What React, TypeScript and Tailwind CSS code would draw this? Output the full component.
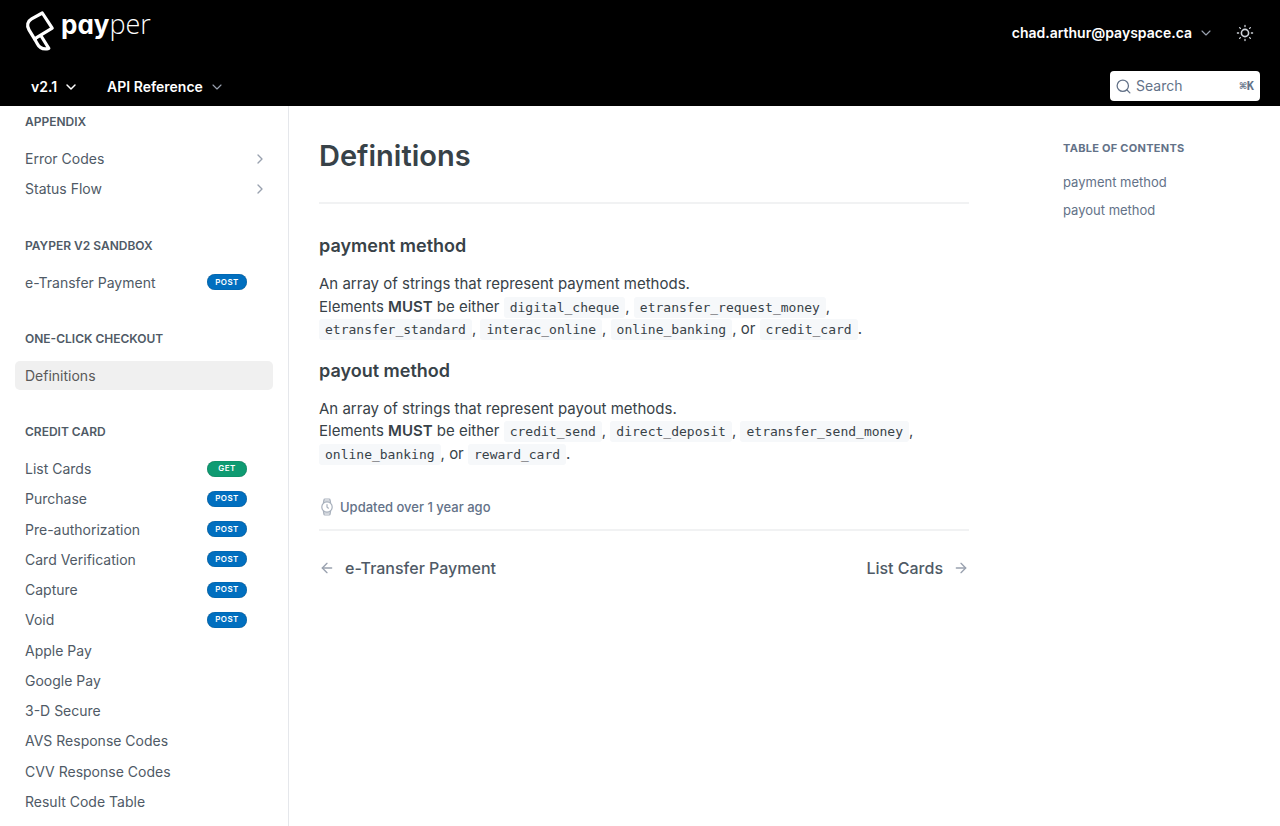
import React from "react";
import { ArrowLeft, ArrowRight, ChevronDown, ChevronRight, Search } from "lucide-react";

type Method = "GET" | "POST";
type Item = { label: string; method?: Method; nested?: boolean; active?: boolean };
type Section = { title: string; items: Item[] };

const sections: Section[] = [
  { title: "APPENDIX", items: [{ label: "Error Codes", nested: true }, { label: "Status Flow", nested: true }] },
  { title: "PAYPER V2 SANDBOX", items: [{ label: "e-Transfer Payment", method: "POST" }] },
  { title: "ONE-CLICK CHECKOUT", items: [{ label: "Definitions", active: true }] },
  {
    title: "CREDIT CARD",
    items: [
      { label: "List Cards", method: "GET" },
      { label: "Purchase", method: "POST" },
      { label: "Pre-authorization", method: "POST" },
      { label: "Card Verification", method: "POST" },
      { label: "Capture", method: "POST" },
      { label: "Void", method: "POST" },
      { label: "Apple Pay" },
      { label: "Google Pay" },
      { label: "3-D Secure" },
      { label: "AVS Response Codes" },
      { label: "CVV Response Codes" },
      { label: "Result Code Table" },
    ],
  },
];

function Logo() {
  return (
    <a href="#home" className="flex items-start gap-1 text-white" aria-label="payper">
      <svg className="mt-2.5 h-[42px] w-8" viewBox="0 0 32 42" fill="none" stroke="currentColor" strokeWidth="3.2" strokeLinejoin="round">
        <path d="M17.3 3 27.2 18.2 9.5 28.8 4 19.8C1.3 15.4 2.6 11.2 6.6 8.9Z" />
        <path d="M9.5 28.8 12 33.2C14.4 38 17.6 40 23.8 38.4L15.8 25.5" />
        <path d="M10 31C10.6 28.6 12 27.4 14.4 26.2" strokeWidth="2" />
      </svg>
      <span className="flex items-baseline leading-12">
        <b className="font-['Inter',sans-serif] text-[26px] font-bold [font-feature-settings:'cv11']">pay</b>
        <span className="font-['Open_Sans',sans-serif] text-[27px] font-light">per</span>
      </span>
    </a>
  );
}

function SunIcon() {
  return (
    <svg className="size-[18px] text-gray-300" viewBox="0 0 18 18" fill="none" stroke="currentColor" strokeLinecap="round">
      <circle cx="9" cy="9" r="3.6" strokeWidth="1.6" />
      <path
        strokeWidth="1.3"
        d="M9 1.4v1.2M9 15.4v1.2M1.4 9h1.2M15.4 9h1.2M3.6 3.6l.8.8M13.6 13.6l.8.8M3.6 14.4l.8-.8M13.6 4.4l.8-.8"
      />
    </svg>
  );
}

function WatchIcon() {
  return (
    <svg className="h-[18px] w-4 text-[#a9b1bd]" viewBox="0 0 16 18" fill="none" stroke="currentColor" strokeWidth="1.2" strokeLinecap="round" strokeLinejoin="round">
      <circle cx="8" cy="9" r="5.2" />
      <path d="M4.4 5 4.9 1.9Q5 1 6 1h4q1 0 1.1.9l.5 3.1M4.4 13l.5 3.1Q5 17 6 17h4q1 0 1.1-.9l.5-3.1M8 6.6V9l1.4 1.2M5 3h6M5 15h6" />
    </svg>
  );
}

function Badge({ method }: { method: Method }) {
  return (
    <span
      className={`mr-4 flex h-4 w-10 items-center justify-center rounded-full text-[8px] font-semibold tracking-wider text-white inset-shadow-[0_0_1px_rgba(0,0,0,0.5)] ${
        method === "GET" ? "bg-[#0f9b72]" : "bg-[#016fbf]"
      }`}
    >
      {method}
    </span>
  );
}

function Code({ children }: { children: string }) {
  return (
    <code className="rounded-[3px] bg-[#f6f8fa] px-1.5 py-[3px] font-['DejaVu_Sans_Mono',monospace] text-[13px]">
      {children}
    </code>
  );
}

function CodeList({ names, or }: { names: string[]; or: string }) {
  return (
    <>
      {names.map((n) => (
        <React.Fragment key={n}>
          <Code>{n}</Code>,{" "}
        </React.Fragment>
      ))}
      or <Code>{or}</Code>.
    </>
  );
}

function Definition({ title, noun, names, or }: { title: string; noun: string; names: string[]; or: string }) {
  return (
    <section className="flex flex-col gap-[15px]">
      <h2 id={title.replace(" ", "-")} className="text-lg leading-6 font-semibold">
        {title}
      </h2>
      <p className="text-[15px] leading-normal">
        An array of strings that represent {noun} methods.
        <br />
        Elements <strong className="font-semibold">MUST</strong> be either <CodeList names={names} or={or} />
      </p>
    </section>
  );
}

export default function App() {
  return (
    <div className="flex h-screen flex-col bg-white font-['Inter',sans-serif] text-[#384248]">
      <header className="flex shrink-0 flex-col bg-black text-white">
        <div className="flex h-[66px] justify-between pr-5 pl-[25px]">
          <Logo />
          <div className="flex items-center gap-4">
            <button className="flex items-center gap-1.5 text-sm font-semibold">
              chad.arthur@payspace.ca
              <ChevronDown className="size-4 text-gray-400" strokeWidth={1.7} />
            </button>
            <button aria-label="Toggle theme" className="flex size-[30px] items-center justify-center">
              <SunIcon />
            </button>
          </div>
        </div>
        <div className="flex h-10 items-center justify-between pr-5 pl-[31px]">
          <nav className="flex items-center gap-7 pt-px">
            <button className="flex items-center gap-1.5 text-sm font-semibold">
              v2.1
              <ChevronDown className="size-4" strokeWidth={2.2} />
            </button>
            <button className="flex items-center gap-1.5 text-sm font-semibold">
              API Reference
              <ChevronDown className="size-4 text-gray-400" strokeWidth={1.7} />
            </button>
          </nav>
          <button className="flex h-[30px] w-[150px] items-center gap-1 rounded bg-white pr-1.5 pl-[5px] text-[#637288]">
            <Search className="size-[17px]" strokeWidth={1.8} />
            <span className="text-sm">Search</span>
            <kbd className="ml-auto font-['DejaVu_Sans_Mono',monospace] text-xs font-bold">⌘K</kbd>
          </button>
        </div>
      </header>

      <div className="flex min-h-0 flex-1">
        <nav className="flex w-[289px] shrink-0 flex-col gap-[33px] overflow-hidden border-r border-gray-200 px-[15px] pt-[7px] text-[#4f5a66]">
          {sections.map((s) => (
            <section key={s.title} className="flex flex-col gap-[13px]">
              <h2 className="px-2.5 text-xs leading-[18px] font-semibold">{s.title}</h2>
              <ul className="flex flex-col gap-px">
                {s.items.map((i) => (
                  <li key={i.label}>
                    <a
                      href="#page"
                      className={`flex items-center justify-between rounded-[5px] px-2.5 py-[5px] text-sm leading-snug ${
                        i.active ? "bg-[#f0f0f0] text-[#595959]" : ""
                      }`}
                    >
                      {i.label}
                      {i.method && <Badge method={i.method} />}
                      {i.nested && <ChevronRight className="-mr-[5px] size-4 text-gray-400" strokeWidth={2} />}
                    </a>
                  </li>
                ))}
              </ul>
            </section>
          ))}
        </nav>

        <main className="min-w-0 flex-1 pl-[30px]">
          <h1 className="border-b-2 border-[#f1f2f3] pt-[30px] pb-[26px] text-[29px] leading-10 font-semibold">Definitions</h1>
          <div className="flex flex-col gap-[18px] pt-[30px]">
            <Definition
              title="payment method"
              noun="payment"
              names={["digital_cheque", "etransfer_request_money", "etransfer_standard", "interac_online", "online_banking"]}
              or="credit_card"
            />
            <Definition
              title="payout method"
              noun="payout"
              names={["credit_send", "direct_deposit", "etransfer_send_money", "online_banking"]}
              or="reward_card"
            />
          </div>
          <p className="mt-8 flex items-center gap-[5px] border-b-2 border-[#f1f2f3] pb-3 text-[13px] leading-5 font-medium text-[#637288]">
            <WatchIcon />
            Updated over 1 year ago
          </p>
          <nav className="flex justify-between pt-[25px] text-base font-medium text-[#4f5a66]">
            <a href="#prev" className="flex items-center gap-2.5">
              <ArrowLeft className="size-4 text-gray-400" strokeWidth={2} />
              e-Transfer Payment
            </a>
            <a href="#next" className="flex items-center gap-2.5">
              List Cards
              <ArrowRight className="size-4 text-gray-400" strokeWidth={2} />
            </a>
          </nav>
        </main>

        <aside className="ml-[94px] w-[217px] shrink-0 pt-8 text-[#637288]">
          <h2 className="text-[11px] leading-5 font-bold tracking-wide">TABLE OF CONTENTS</h2>
          <ul className="flex flex-col gap-2 pt-3.5 text-[13px] leading-5">
            <li>
              <a href="#payment-method">payment method</a>
            </li>
            <li>
              <a href="#payout-method">payout method</a>
            </li>
          </ul>
        </aside>
      </div>
    </div>
  );
}
